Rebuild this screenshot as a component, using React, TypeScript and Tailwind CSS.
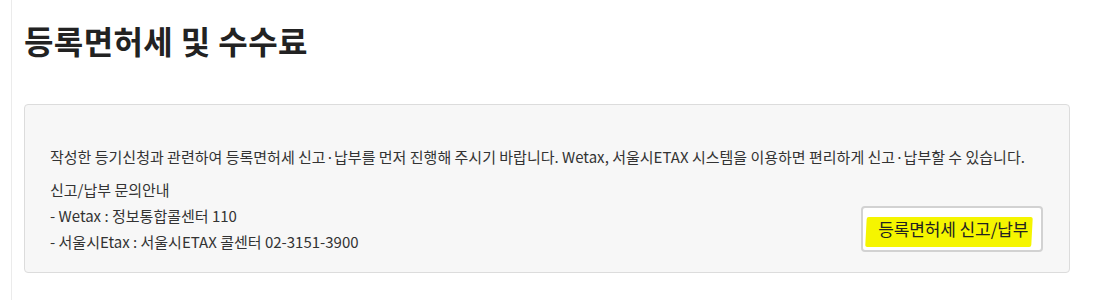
import React from "react";

export default function App() {
  const font = { fontFamily: '"Noto Sans CJK KR", "Noto Sans", sans-serif' };
  return (
    <div className="w-[1117px] h-[300px] bg-white overflow-hidden flex" style={font}>
      <div className="w-[11px] shrink-0" />
      <div className="w-px shrink-0 bg-[#ebebeb]" />
      <div className="flex-1 pl-[12px] pr-[47px]">
        <h1 className="mt-[20px] text-[32px] leading-[40px] font-bold text-[#222] tracking-[0.4px]">
          등록면허세 및 수수료
        </h1>
        <div className="mt-[44px] h-[169px] rounded-[4px] border border-[#dcdcdc] bg-[#f7f7f7] pl-[25px] pr-[20px] pt-[40px] text-[15px] text-[#333]">
          <p className="leading-[24px] whitespace-nowrap">
            작성한 등기신청과 관련하여 등록면허세 신고·납부를 먼저 진행해 주시기 바랍니다. Wetax, 서울시ETAX 시스템을 이용하면 편리하게 신고·납부할 수 있습니다.
          </p>
          <div className="mt-[8px] flex items-end justify-between pr-[6px]">
            <div className="leading-[26px]">
              <p>신고/납부 문의안내</p>
              <p>- Wetax : 정보통합콜센터 110</p>
              <p>- 서울시Etax : 서울시ETAX 콜센터 02-3151-3900</p>
            </div>
            <button className="mb-[3px] w-[182px] h-[46px] rounded-[4px] border-2 border-[#d2d2d2] bg-white flex items-center justify-start pl-[3px] pt-[5px] text-[17px] text-[#222] tracking-[-0.1px]">
              <span className="bg-[#f5f500] pl-[12px] pr-[4px] py-[2px] -skew-x-3 rounded-[2px]">
                <span className="inline-block skew-x-3 -translate-y-[3px]">등록면허세 신고/납부</span>
              </span>
            </button>
          </div>
        </div>
      </div>
    </div>
  );
}
